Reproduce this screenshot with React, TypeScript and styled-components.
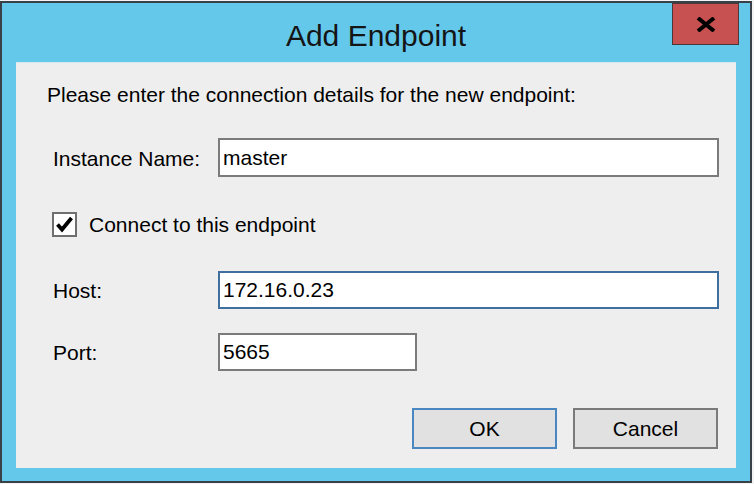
import * as React from "react";
import styled, { createGlobalStyle } from "styled-components";

const GlobalStyle = createGlobalStyle`
  html, body {
    margin: 0;
    padding: 0;
    background: #f3f3f3;
  }
  body {
    font-family: "Liberation Sans", Arial, sans-serif;
    color: #000;
  }
  * {
    box-sizing: border-box;
  }
`;

const Window = styled.div`
  width: 752px;
  height: 482px;
  margin-top: 1px;
  border: 2px solid #3a4047;
  background: #64c8eb;
  display: flex;
  flex-direction: column;
`;

const TitleBar = styled.div`
  height: 59px;
  display: grid;
  grid-template-columns: 1fr auto 1fr;
  align-items: start;
`;

const Title = styled.h1`
  grid-column: 2;
  margin: 0;
  padding-top: 18px;
  font-size: 30px;
  line-height: 30px;
  font-weight: 400;
  color: #151515;
`;

const CloseButton = styled.button`
  grid-column: 3;
  justify-self: end;
  margin-right: 11px;
  width: 67px;
  height: 42px;
  padding: 0;
  background: #c75050;
  border: 1px solid #4d3838;
  display: flex;
  align-items: center;
  justify-content: center;
`;

const Frame = styled.div`
  flex: 1;
  display: flex;
  padding: 0 14px 13px;
`;

const Panel = styled.div`
  flex: 1;
  display: flex;
  flex-direction: column;
  background: #eeeeee;
  border-top: 1px solid #d6eaf2;
  padding: 20px 18px 19px 31px;
`;

const Intro = styled.p`
  margin: 0;
  font-size: 21px;
  line-height: 24px;
`;

const Form = styled.div`
  display: flex;
  flex-direction: column;
  margin-left: 6px;
  margin-right: -1px;
`;

const Row = styled.div<{ $top: number }>`
  display: grid;
  grid-template-columns: 165px 1fr;
  align-items: center;
  margin-top: ${(p) => p.$top}px;
`;

const Label = styled.label`
  font-size: 21px;
  line-height: 24px;
  padding-top: 2px;
`;

const Field = styled.div<{ $width?: number; $height: number; $focused?: boolean }>`
  width: ${(p) => (p.$width ? `${p.$width}px` : "100%")};
  height: ${(p) => p.$height}px;
  background: #fff;
  border: 2px solid ${(p) => (p.$focused ? "#3f6f9f" : "#7b7b7b")};
  padding: 0 3px;
  display: flex;
  align-items: center;
  font-size: 21px;
`;

const CheckRow = styled.label<{ $top: number }>`
  display: flex;
  align-items: center;
  gap: 12px;
  margin-top: ${(p) => p.$top}px;
  margin-left: -1px;
  font-size: 21px;
  line-height: 24px;
`;

const CheckBox = styled.span`
  width: 25px;
  height: 25px;
  background: #fff;
  border: 2px solid #6f6f6f;
  display: flex;
`;

const Buttons = styled.div`
  margin-top: auto;
  display: flex;
  justify-content: flex-end;
  gap: 16px;
`;

const Button = styled.button<{ $primary?: boolean }>`
  width: 145px;
  height: 41px;
  padding: 0;
  background: #e1e1e1;
  border: 2px solid ${(p) => (p.$primary ? "#4a86c0" : "#7a7a7a")};
  font-family: "Liberation Sans", Arial, sans-serif;
  font-size: 21px;
  color: #000;
`;

const App = () => (
  <>
    <GlobalStyle />
    <Window>
      <TitleBar>
        <Title>Add Endpoint</Title>
        <CloseButton aria-label="Close">
          <svg width="20" height="15" viewBox="0 0 20 15">
            <path d="M2 1 L18 14 M18 1 L2 14" stroke="#000" strokeWidth="4" fill="none" />
          </svg>
        </CloseButton>
      </TitleBar>
      <Frame>
        <Panel>
          <Intro>Please enter the connection details for the new endpoint:</Intro>
          <Form>
            <Row $top={31}>
              <Label>Instance Name:</Label>
              <Field $height={39}>master</Field>
            </Row>
            <CheckRow $top={35}>
              <CheckBox>
                <svg width="21" height="21" viewBox="0 0 21 21">
                  <path d="M3.5 10.5 L8 15.5 L17.5 4" stroke="#000" strokeWidth="3.8" fill="none" />
                </svg>
              </CheckBox>
              Connect to this endpoint
            </CheckRow>
            <Row $top={34}>
              <Label>Host:</Label>
              <Field $height={38} $focused>172.16.0.23</Field>
            </Row>
            <Row $top={24}>
              <Label>Port:</Label>
              <Field $height={38} $width={199}>5665</Field>
            </Row>
          </Form>
          <Buttons>
            <Button $primary>OK</Button>
            <Button>Cancel</Button>
          </Buttons>
        </Panel>
      </Frame>
    </Window>
  </>
);

export default App;
